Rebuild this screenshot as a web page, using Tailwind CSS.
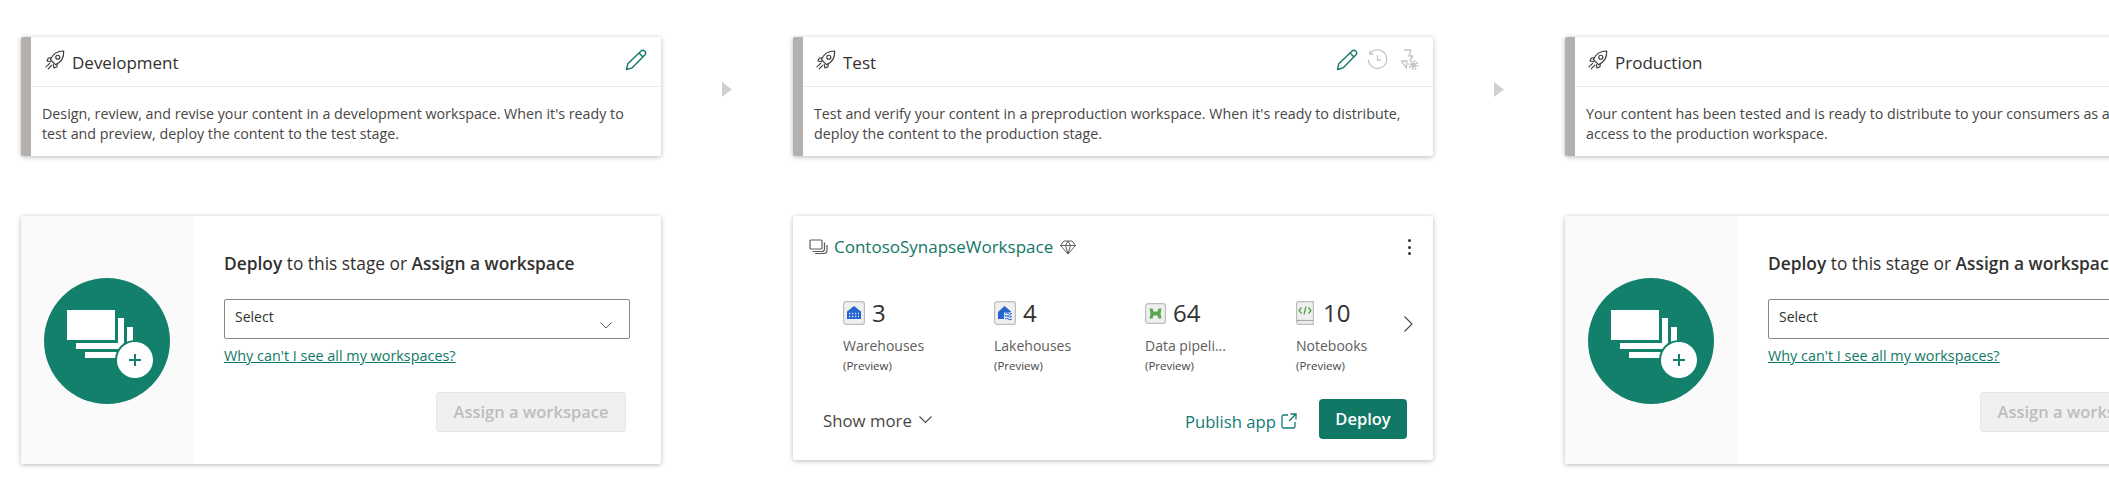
<!doctype html>
<html lang="en">
<head>
<meta charset="utf-8">
<title>Deployment pipeline</title>
<script src="https://cdn.jsdelivr.net/npm/@tailwindcss/browser@4"></script>
</head>
<body class="bg-white overflow-hidden font-['Open_Sans','Noto_Sans',sans-serif] text-[#323130]">
<svg class="hidden" xmlns="http://www.w3.org/2000/svg">
  <symbol id="rocket" viewBox="0 0 20 20">
    <g fill="none" stroke="#3b3a39" stroke-width="1.150" stroke-linejoin="round" stroke-linecap="round">
      <path d="M18.700 1C13 1 7.800 3.800 5.300 9.500L10.500 14.700C16.200 12.200 19 7 18.700 1Z"/>
      <circle cx="12.800" cy="7.200" r="2"/>
      <path d="M6.500 7.800L3.300 8L2 11L5.500 11.800"/>
      <path d="M12.200 13.500L12 16.700L9 18L8.200 14.500"/>
      <path d="M4.600 13.400L2.600 15.400M6.600 15.400L3.200 18.800M1 16.800L1.600 16.200"/>
    </g>
  </symbol>
  <symbol id="pencil" viewBox="0 0 22 22">
    <g fill="none" stroke="#117865" stroke-width="1.400" stroke-linejoin="round">
      <path d="M1.500 20.500L2.800 14.800L15.800 2.200A2.700 2.700 0 0 1 19.800 6L7 18.900Z"/>
      <path d="M14 4L18 8"/>
    </g>
  </symbol>
  <symbol id="addworkspace" viewBox="0 0 126 126">
    <circle cx="63" cy="63" r="63" fill="#13806c"/>
    <path fill="#fff" d="M23 32H71V62H23ZM74 40H80V71H32V65H74ZM83 49H89V80H41V74H83Z"/>
    <circle cx="91" cy="82" r="20" fill="#13806c"/>
    <circle cx="91" cy="82" r="18" fill="#fff"/>
    <path fill="#13806c" d="M90 76H92V81H97V83H92V88H90V83H85V81H90Z"/>
  </symbol>
</svg>

<main class="flex items-start pl-[21px] pt-[37px] w-[2300px] h-[492px]">

  <section class="w-[640px] shrink-0">
    <div class="h-[119px] rounded-[2px] bg-white border-l-[10px] border-[#b3b0ad] shadow-[0_1px_5px_rgba(0,0,0,0.28)]">
      <div class="h-[50px] flex items-center pl-[14px] pr-[14px] border-b border-[#edebe9]">
        <svg class="w-5 h-5 -mt-1"><use href="#rocket"/></svg>
        <h2 class="ml-[7px] mt-[1px] text-[17px] font-normal leading-none">Development</h2>
        <svg class="ml-auto w-[22px] h-[22px] -mt-1"><use href="#pencil"/></svg>
      </div>
      <p class="pl-[11px] pt-[17px] text-[14.25px] leading-[20px] text-[#484644] whitespace-nowrap">Design, review, and revise your content in a development workspace. When it's ready to<br>test and preview, deploy the content to the test stage.</p>
    </div>
    <div class="mt-[60px] h-[248px] flex rounded-[2px] bg-white shadow-[0_1px_5px_rgba(0,0,0,0.28)]">
      <div class="w-[172px] shrink-0 bg-[#fafafa] flex items-center justify-center pt-[2px] rounded-l-[2px]">
        <svg class="w-[126px] h-[126px]"><use href="#addworkspace"/></svg>
      </div>
      <div class="pl-[31px] pt-[36px]">
        <p class="text-[17.35px] leading-[22px] whitespace-nowrap"><b class="font-semibold">Deploy</b> to this stage or <b class="font-semibold">Assign a workspace</b></p>
        <div class="mt-[25px] w-[406px] h-[40px] border border-[#8a8886] rounded-[2px] pl-[10px] pr-[17px] flex justify-between">
          <span class="text-[14px] leading-[34px]">Select</span>
          <svg class="w-3 h-3 mt-[19px]" viewBox="0 0 12 12" fill="none" stroke="#555" stroke-width="1"><path d="M.5 3.500L6 9L11.500 3.500"/></svg>
        </div>
        <a class="block mt-[7px] text-[14.4px] leading-[20px] text-[#117865] underline whitespace-nowrap">Why can't I see all my workspaces?</a>
        <div class="mt-[26px] ml-[212px] w-[190px] h-[40px] rounded-[3px] bg-[#f0f0f0] border border-[#e6e6e6] text-[#bdbdbd] text-[16.500px] font-semibold flex items-center justify-center whitespace-nowrap">Assign a workspace</div>
      </div>
    </div>
  </section>

  <div class="w-[132px] shrink-0 flex justify-center pt-[45px]">
    <svg class="w-[10px] h-[15px]" viewBox="0 0 10 15"><path fill="#d2d0ce" d="M0 0L10 7.500L0 15Z"/></svg>
  </div>

  <section class="w-[640px] shrink-0">
    <div class="h-[119px] rounded-[2px] bg-white border-l-[10px] border-[#b3b0ad] shadow-[0_1px_5px_rgba(0,0,0,0.28)]">
      <div class="h-[50px] flex items-center pl-[13px] pr-[14px] border-b border-[#edebe9]">
        <svg class="w-5 h-5 -mt-1"><use href="#rocket"/></svg>
        <h2 class="ml-[7px] mt-[1px] text-[17px] font-normal leading-none">Test</h2>
        <div class="ml-auto flex items-center gap-[9px] -mt-1">
          <svg class="w-[22px] h-[22px]"><use href="#pencil"/></svg>
          <svg class="w-[21px] h-[21px]" viewBox="0 0 21 21" fill="none" stroke="#c8c6c4" stroke-width="1.300"><path d="M3.200 4.500A9.200 9.200 0 1 1 1.300 10.500"/><path d="M2.800 1.500V5H6.300"/><path d="M10.500 6V11H14"/></svg>
          <svg class="ml-[3px] w-[19px] h-[22px]" viewBox="0 0 19 22" fill="none" stroke="#c8c6c4" stroke-width="1.300" stroke-linejoin="round"><path d="M4 1H11L9 7H13L9.500 11.500M6.500 19L7 12H1.500Z"/><circle cx="13.500" cy="16" r="2" fill="#c8c6c4"/><circle cx="13.500" cy="16" r="4" stroke-dasharray="1.600 1.500" stroke-width="2"/></svg>
        </div>
      </div>
      <p class="pl-[11px] pt-[17px] text-[14.25px] leading-[20px] text-[#484644] whitespace-nowrap">Test and verify your content in a preproduction workspace. When it's ready to distribute,<br>deploy the content to the production stage.</p>
    </div>

    <div class="mt-[60px] h-[244px] rounded-[2px] bg-white shadow-[0_1px_5px_rgba(0,0,0,0.28)] pt-[22px] pl-[16px] pr-[26px]">
      <div class="flex items-center h-[18px]">
        <svg class="w-[19px] h-[16px]" viewBox="0 0 19 16" fill="none" stroke="#605e5c" stroke-width="1.200"><rect x="1" y="1" width="12" height="9" rx="1"/><path d="M15.500 3.500V10A2.500 2.500 0 0 1 13 12.500H3.500"/><path d="M18 6V11.500A3 3 0 0 1 15 14.500H6"/></svg>
        <span class="ml-[6px] text-[#117865] text-[17px] font-medium whitespace-nowrap">ContosoSynapseWorkspace</span>
        <svg class="ml-[7px] w-4 h-[15px]" viewBox="0 0 16 15" fill="none" stroke="#605e5c" stroke-width="1" stroke-linejoin="round"><path d="M4 1H12L15.500 5.500L8 14L.5 5.500ZM.5 5.500H15.500M5.500 5.500L8 14L10.500 5.500L8 1L5.500 5.500"/></svg>
        <div class="ml-auto mr-[-4px] flex flex-col gap-[3.500px]">
          <i class="block w-[3px] h-[3px] rounded-full bg-[#323130]"></i>
          <i class="block w-[3px] h-[3px] rounded-full bg-[#323130]"></i>
          <i class="block w-[3px] h-[3px] rounded-full bg-[#323130]"></i>
        </div>
      </div>

      <div class="relative mt-[45px] ml-[34px] flex">
        <div class="w-[151px] shrink-0">
          <div class="flex items-center h-[24px]">
            <svg class="w-[22px] h-[24px]" viewBox="0 0 22 24"><rect x=".6" y=".6" width="20.800" height="22.800" rx="2.500" fill="#efefef" stroke="#bdbdbd" stroke-width="1.200"/><path fill="#2564cf" d="M4 10.500L11 5L18 10.500V18H4Z"/><path stroke="#d9e5f8" stroke-width="1.300" stroke-dasharray="1.300 1.700" d="M6 12.500H16M6 15.500H16"/></svg>
            <span class="ml-[7px] text-[24px] leading-none text-[#323130]">3</span>
          </div>
          <div class="mt-[11px] text-[14px] leading-[20px] text-[#605e5c]">Warehouses</div>
          <div class="text-[11.500px] leading-[20px] text-[#484644]">(Preview)</div>
        </div>
        <div class="w-[151px] shrink-0">
          <div class="flex items-center h-[24px]">
            <svg class="w-[22px] h-[24px]" viewBox="0 0 22 24"><rect x=".6" y=".6" width="20.800" height="22.800" rx="2.500" fill="#efefef" stroke="#bdbdbd" stroke-width="1.200"/><path fill="#2564cf" d="M4 11L10.500 5L17 10.500V18H4Z"/><path fill="none" stroke="#efefef" stroke-width="3" d="M10 13H20M10 16.500H20"/><path fill="none" stroke="#2564cf" stroke-width="1" d="M11 12.500Q12.500 11 14 12.500T18 12.500M11 15.500Q12.500 14 14 15.500T18 15.500M11 18Q12.500 16.500 14 18T18 18"/></svg>
            <span class="ml-[7px] text-[24px] leading-none text-[#323130]">4</span>
          </div>
          <div class="mt-[11px] text-[14px] leading-[20px] text-[#605e5c]">Lakehouses</div>
          <div class="text-[11.500px] leading-[20px] text-[#484644]">(Preview)</div>
        </div>
        <div class="w-[151px] shrink-0">
          <div class="flex items-center h-[24px]">
            <svg class="w-[21px] h-[21px]" viewBox="0 0 21 21"><rect x=".6" y=".6" width="19.800" height="19.800" rx="2.500" fill="#efefef" stroke="#bdbdbd" stroke-width="1.200"/><path fill="#58a84e" d="M4.500 5.500H7.500L8.500 8.500H12.500L13.500 5.500H16.500L15.500 10.500L16.500 15.500H13.500L12.500 12.500H8.500L7.500 15.500H4.500L5.500 10.500Z"/></svg>
            <span class="ml-[7px] text-[24px] leading-none text-[#323130]">64</span>
          </div>
          <div class="mt-[11px] text-[14px] leading-[20px] text-[#605e5c]">Data pipeli...</div>
          <div class="text-[11.500px] leading-[20px] text-[#484644]">(Preview)</div>
        </div>
        <div class="w-[106px] shrink-0">
          <div class="flex items-center h-[24px]">
            <svg class="w-[18px] h-[24px]" viewBox="0 0 18 24"><path fill="#efefef" stroke="#bdbdbd" stroke-width="1.200" d="M.6 20V2.500Q.6.6 2.500.6H17.400V23.400H3Q.6 23.400.6 20Z"/><path fill="none" stroke="#aaa" stroke-width="1.200" d="M1 19.500H17.400"/><path fill="none" stroke="#4ba13e" stroke-width="1.200" d="M5.500 6.500L3 9.500L5.500 12.500M12.500 6.500L15 9.500L12.500 12.500M10 5.500L8 13.500"/></svg>
            <span class="ml-[9px] text-[24px] leading-none text-[#323130]">10</span>
          </div>
          <div class="mt-[11px] text-[14px] leading-[20px] text-[#605e5c]">Notebooks</div>
          <div class="text-[11.500px] leading-[20px] text-[#484644]">(Preview)</div>
        </div>
        <svg class="absolute left-[561px] top-[15px] w-[9px] h-4" viewBox="0 0 9 16" fill="none" stroke="#484644" stroke-width="1.100"><path d="M.5.5L8 8L.5 15.500"/></svg>
      </div>

      <div class="mt-[23px] flex items-center h-[40px]">
        <span class="ml-[14px] mt-[3px] text-[16.800px] text-[#484644] whitespace-nowrap">Show more</span>
        <svg class="ml-[7px] mt-[2px] w-[13px] h-2" viewBox="0 0 13 8" fill="none" stroke="#484644" stroke-width="1.100"><path d="M.5.5L6.500 6.500L12.500.5"/></svg>
        <span class="ml-auto mt-[5px] text-[16.700px] text-[#117a75] whitespace-nowrap">Publish app</span>
        <svg class="ml-[5px] mt-[3px] w-4 h-4" viewBox="0 0 16 16" fill="none" stroke="#117a75" stroke-width="1.300"><path d="M7 2H2.500A1.500 1.500 0 0 0 1 3.500V13.500A1.500 1.500 0 0 0 2.500 15H12.500A1.500 1.500 0 0 0 14 13.500V9M9.500 1H15V6.500M15 1L8 8"/></svg>
        <div class="ml-[22px] w-[88px] h-[40px] rounded-[4px] bg-[#117865] text-white text-[16.500px] font-semibold flex items-center justify-center">Deploy</div>
      </div>
    </div>
  </section>

  <div class="w-[132px] shrink-0 flex justify-center pt-[45px]">
    <svg class="w-[10px] h-[15px]" viewBox="0 0 10 15"><path fill="#d2d0ce" d="M0 0L10 7.500L0 15Z"/></svg>
  </div>

  <section class="w-[640px] shrink-0">
    <div class="h-[119px] rounded-[2px] bg-white border-l-[10px] border-[#b3b0ad] shadow-[0_1px_5px_rgba(0,0,0,0.28)]">
      <div class="h-[50px] flex items-center pl-[13px] pr-[14px] border-b border-[#edebe9]">
        <svg class="w-5 h-5 -mt-1"><use href="#rocket"/></svg>
        <h2 class="ml-[7px] mt-[1px] text-[17px] font-normal leading-none">Production</h2>
      </div>
      <p class="pl-[11px] pt-[17px] text-[14.25px] leading-[20px] text-[#484644] whitespace-nowrap">Your content has been tested and is ready to distribute to your consumers as an app. Grant<br>access to the production workspace.</p>
    </div>
    <div class="mt-[60px] h-[248px] flex rounded-[2px] bg-white shadow-[0_1px_5px_rgba(0,0,0,0.28)]">
      <div class="w-[172px] shrink-0 bg-[#fafafa] flex items-center justify-center pt-[2px] rounded-l-[2px]">
        <svg class="w-[126px] h-[126px]"><use href="#addworkspace"/></svg>
      </div>
      <div class="pl-[31px] pt-[36px]">
        <p class="text-[17.35px] leading-[22px] whitespace-nowrap"><b class="font-semibold">Deploy</b> to this stage or <b class="font-semibold">Assign a workspace</b></p>
        <div class="mt-[25px] w-[406px] h-[40px] border border-[#8a8886] rounded-[2px] pl-[10px] pr-[17px] flex justify-between">
          <span class="text-[14px] leading-[34px]">Select</span>
          <svg class="w-3 h-3 mt-[19px]" viewBox="0 0 12 12" fill="none" stroke="#555" stroke-width="1"><path d="M.5 3.500L6 9L11.500 3.500"/></svg>
        </div>
        <a class="block mt-[7px] text-[14.4px] leading-[20px] text-[#117865] underline whitespace-nowrap">Why can't I see all my workspaces?</a>
        <div class="mt-[26px] ml-[212px] w-[190px] h-[40px] rounded-[3px] bg-[#f0f0f0] border border-[#e6e6e6] text-[#bdbdbd] text-[16.500px] font-semibold flex items-center justify-center whitespace-nowrap">Assign a workspace</div>
      </div>
    </div>
  </section>
</main>
</body>
</html>
